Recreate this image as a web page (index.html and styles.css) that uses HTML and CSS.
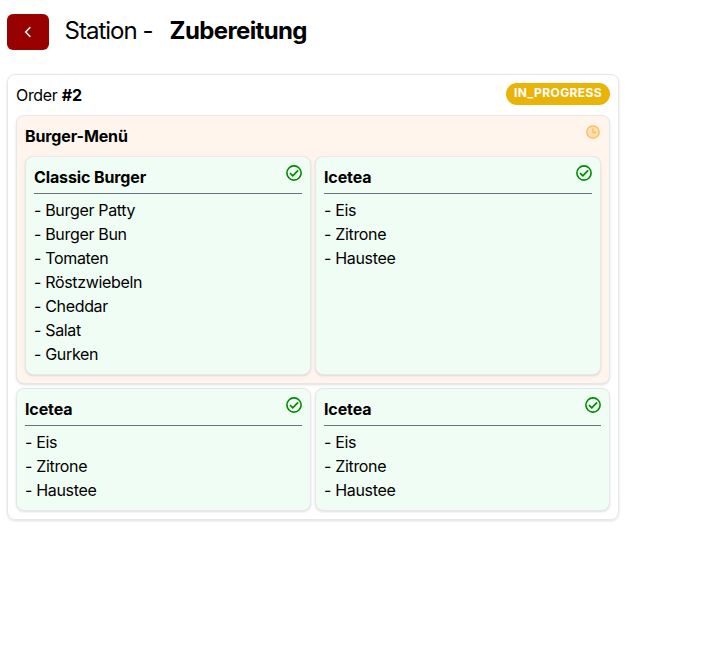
FILE: index.html
```html
<!DOCTYPE html>
<html lang="de">
<head>
<meta charset="utf-8">
<title>Station - Zubereitung</title>
<link rel="stylesheet" href="styles.css">
</head>
<body>
<svg class="defs" aria-hidden="true">
  <symbol id="check" viewBox="0 0 16 16"><circle cx="8" cy="8" r="7.1" fill="none" stroke="currentColor" stroke-width="1.6"/><path d="M4 8.1 6.8 10.8 12.1 5.4" fill="none" stroke="currentColor" stroke-width="1.7"/></symbol>
</svg>
<header class="top">
  <button class="back" aria-label="Zurück"><svg width="8" height="12" viewBox="0 0 8 12"><path d="M6.3 1.2 1.7 6l4.6 4.8" fill="none" stroke="currentColor" stroke-width="1.6"/></svg></button>
  <h1 class="heading"><span class="prefix">Station -</span><b>Zubereitung</b></h1>
</header>
<main class="card order">
  <div class="order-head"><div class="order-name">Order <b>#2</b></div><span class="badge">IN_PROGRESS</span></div>
  <section class="card menu">
    <div class="menu-head"><h2 class="name">Burger-Menü</h2>
      <svg class="clock" viewBox="0 0 14 14"><circle cx="7" cy="7" r="6.2" fill="#ffe0b2" stroke="#ffb74d" stroke-width="1.3"/><path d="M7 3.2V7.5H10.2" fill="none" stroke="#ffb74d" stroke-width="1.3"/></svg></div>
    <div class="grid">
      <article class="card item">
        <div class="item-head"><h3 class="name">Classic Burger</h3><svg class="check"><use href="#check"/></svg></div>
        <ul><li>- Burger Patty</li><li>- Burger Bun</li><li>- Tomaten</li><li>- Röstzwiebeln</li><li>- Cheddar</li><li>- Salat</li><li>- Gurken</li></ul>
      </article>
      <article class="card item">
        <div class="item-head"><h3 class="name">Icetea</h3><svg class="check"><use href="#check"/></svg></div>
        <ul><li>- Eis</li><li>- Zitrone</li><li>- Haustee</li></ul>
      </article>
    </div>
  </section>
  <div class="grid">
    <article class="card item">
      <div class="item-head"><h3 class="name">Icetea</h3><svg class="check"><use href="#check"/></svg></div>
      <ul><li>- Eis</li><li>- Zitrone</li><li>- Haustee</li></ul>
    </article>
    <article class="card item">
      <div class="item-head"><h3 class="name">Icetea</h3><svg class="check"><use href="#check"/></svg></div>
      <ul><li>- Eis</li><li>- Zitrone</li><li>- Haustee</li></ul>
    </article>
  </div>
</main>
</body>
</html>
```
FILE: styles.css
```css
* { box-sizing: border-box; margin: 0; padding: 0; }
body { min-height: 100vh; background: #fff; color: #000; font: 16px/24px Inter, "Liberation Sans", sans-serif; letter-spacing: -0.33px; padding: 14px 0 16px 7px; }
.defs { display: none; }
.top { display: flex; height: 36px; margin-bottom: 24px; }
.back { width: 42px; height: 36px; border: 0; border-radius: 6px; background: #990000; color: #fff; display: flex; align-items: center; justify-content: center; }
.heading { display: flex; gap: 17px; margin-left: 15.5px; font-size: 24px; line-height: 34px; font-weight: 400; letter-spacing: -0.62px; }
.prefix { letter-spacing: -0.98px; }
.heading b { font-weight: 700; }
.order-name b { letter-spacing: 0; }
.card { border: 1px solid #e5e7eb; border-radius: 8px; padding: 8px; box-shadow: 0 1px 3px rgba(0,0,0,.1), 0 1px 2px -1px rgba(0,0,0,.1); }
.order { width: 612px; }
.order-head { display: flex; justify-content: space-between; align-items: flex-start; height: 32px; }
.badge { height: 22px; padding: 0 8px; border-radius: 11px; background: #eab308; color: #fff; font-size: 12px; line-height: 20px; font-weight: 700; letter-spacing: .39px; }
.menu { background: #fff5ed; margin-bottom: 4px; }
.menu-head { display: flex; justify-content: space-between; height: 32px; }
.clock { width: 14px; height: 14px; margin: 1px 1px 0 0; }
.grid { display: grid; grid-template-columns: 1fr 1fr; gap: 4px; }
.item { background: #f0fdf4; }
.item-head { display: flex; justify-content: space-between; height: 29px; border-bottom: 1px solid #6b7280; margin-bottom: 4px; }
.name { font-size: 16px; line-height: 24px; font-weight: 700; letter-spacing: -0.12px; }
.check { width: 16px; height: 16px; color: #008a00; }
ul { list-style: none; }
```
